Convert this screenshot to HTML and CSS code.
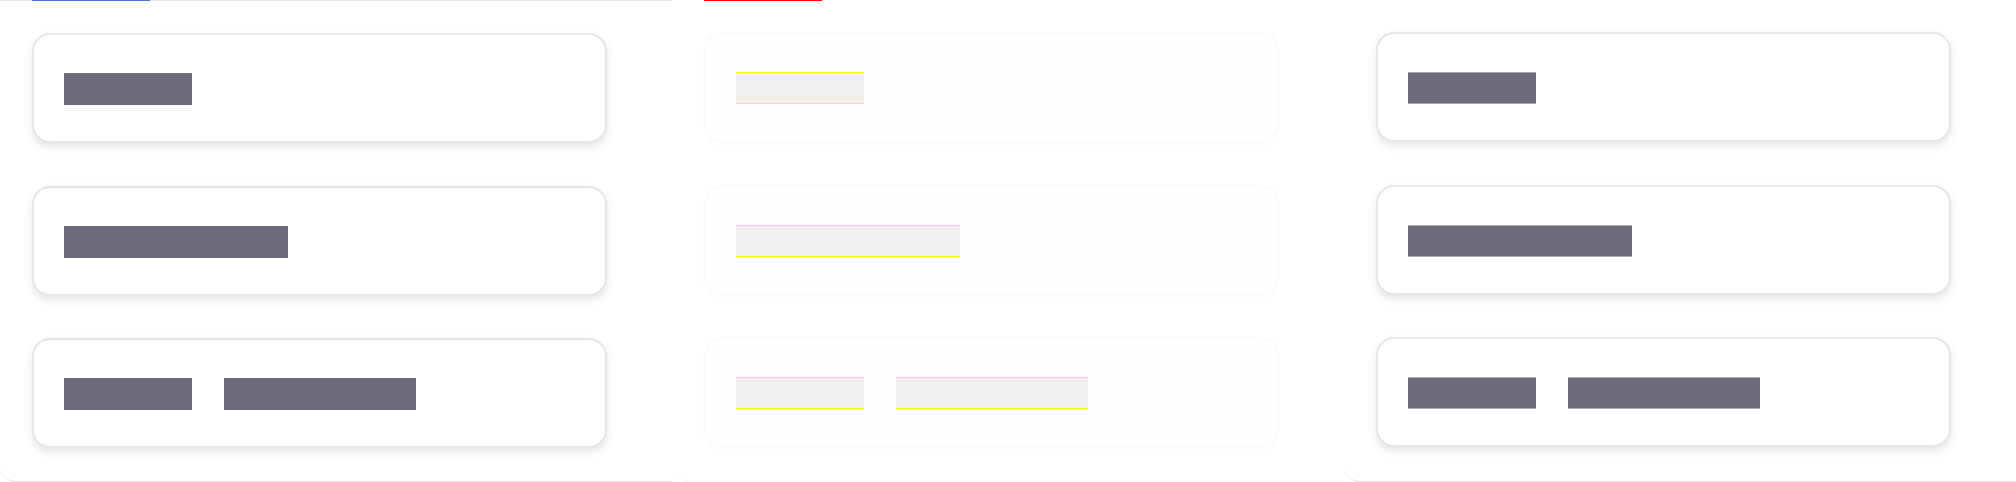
FILE: index.html
```html
<!DOCTYPE html>
<html>
<head>
<meta charset="utf-8">
<link rel="stylesheet" href="styles.css">
</head>
<body>
<div class="stage">
  <section class="panel panel-solid panel-first">
    <div class="tab-indicator tab-blue"></div>
    <div class="card"><div class="row"><span class="bar w128"></span></div></div>
    <div class="card"><div class="row"><span class="bar w224"></span></div></div>
    <div class="card"><div class="row"><span class="bar w128"></span><span class="bar w192"></span></div></div>
  </section>
  <section class="panel panel-ghost">
    <div class="tab-indicator tab-red"></div>
    <div class="card"><div class="row"><span class="bar w128"></span></div></div>
    <div class="card"><div class="row"><span class="bar w224"></span></div></div>
    <div class="card"><div class="row"><span class="bar w128"></span><span class="bar w192"></span></div></div>
  </section>
  <section class="panel panel-solid panel-last">
    <div class="card"><div class="row"><span class="bar w128"></span></div></div>
    <div class="card"><div class="row"><span class="bar w224"></span></div></div>
    <div class="card"><div class="row"><span class="bar w128"></span><span class="bar w192"></span></div></div>
  </section>
</div>
</body>
</html>
```

FILE: styles.css
```css
html, body {
  margin: 0;
  padding: 0;
  background: #ffffff;
  font-family: "Liberation Sans", Arial, sans-serif;
}

.stage {
  display: grid;
  grid-template-columns: 672px 672px 672px;
  width: 2016px;
  height: 482px;
  overflow: hidden;
}

.panel {
  position: relative;
  box-sizing: border-box;
  height: 482px;
  padding: 32px 0 33px 32px;
  display: flex;
  flex-direction: column;
  gap: 42.5px;
  background: #ffffff;
  border-bottom: 1px solid #e4e4e4;
  border-bottom-left-radius: 16px;
}

.panel-first {
  border-top: 1px solid #e4e4e4;
}

.panel-ghost {
  border-bottom-color: #f8f8f8;
}

.tab-indicator {
  position: absolute;
  top: -1px;
  left: 32px;
  width: 118px;
  height: 1px;
}

.panel-ghost .tab-indicator {
  top: 0;
}

.tab-blue { background: #4a6ee0; }
.tab-red { background: #ff0000; }

.card {
  box-sizing: border-box;
  width: 575px;
  height: 110px;
  padding: 38px 30px 36px;
  border: 2px solid #e6e6e6;
  border-radius: 18px;
  background: #ffffff;
  box-shadow: 0 4px 8px rgba(0, 0, 0, 0.10);
}

.panel-ghost .card {
  background: #fefefe;
  border-color: #fafafa;
  box-shadow: 0 4px 8px rgba(0, 0, 0, 0.012);
}

.row {
  display: flex;
  gap: 32px;
}

.bar {
  display: block;
  box-sizing: border-box;
  height: 32px;
  background: #6b6b7c;
}

.panel-last .bar {
  border-top: 1px solid #a6a6b4;
  border-bottom: 1px solid #a6a6b4;
}

.panel-ghost .bar {
  background: #f0f0f0;
  border-top: 1px solid #ffff00;
  border-bottom: 1px solid #ffff00;
}

.w128 { width: 128px; }
.w192 { width: 192px; }
.w224 { width: 224px; }
```
